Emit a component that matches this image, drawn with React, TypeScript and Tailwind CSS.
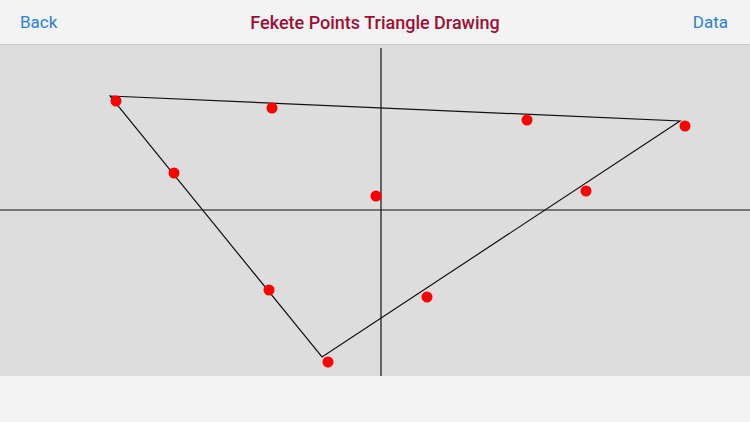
import React from 'react';

const DOTS: Array<[number, number]> = [
  [116, 101], [272, 108], [527, 120], [685, 126], [174, 173],
  [376, 196], [586, 191], [269, 290], [427, 297], [328, 362],
];

// canvas starts at y=45 in page coords
const TOP = 45;

export default function App() {
  return (
    <div className="w-[750px] h-[422px] flex flex-col bg-[#f3f3f3] font-['Roboto','Liberation_Sans',sans-serif] overflow-hidden">
      <header className="h-[45px] shrink-0 flex items-center justify-between px-[20px] pt-[1px] border-b border-[#c8c8c8] bg-[#f3f3f3]">
        <span className="text-[17px] text-[#2b7fd9]">Back</span>
        <span className="text-[18px] font-medium text-[#9c1034]">Fekete Points Triangle Drawing</span>
        <span className="text-[17px] text-[#2b7fd9] mr-[2px]">Data</span>
      </header>
      <div className="h-[331px] shrink-0 bg-[#dddddd]">
        <svg width="750" height="331" viewBox={`0 ${TOP} 750 331`} className="block">
          <line x1="381" y1="48" x2="381" y2="376" stroke="#111" strokeWidth="1.2" />
          <line x1="0" y1="210" x2="750" y2="210" stroke="#111" strokeWidth="1.2" />
          <polygon points="110,96 680,121 322,357" fill="none" stroke="#111" strokeWidth="1.2" />
          {DOTS.map(([x, y], i) => (
            <circle key={i} cx={x} cy={y} r="5.5" fill="#ff0000" />
          ))}
        </svg>
      </div>
      <div className="flex-1 bg-[#f3f3f3]" />
    </div>
  );
}
